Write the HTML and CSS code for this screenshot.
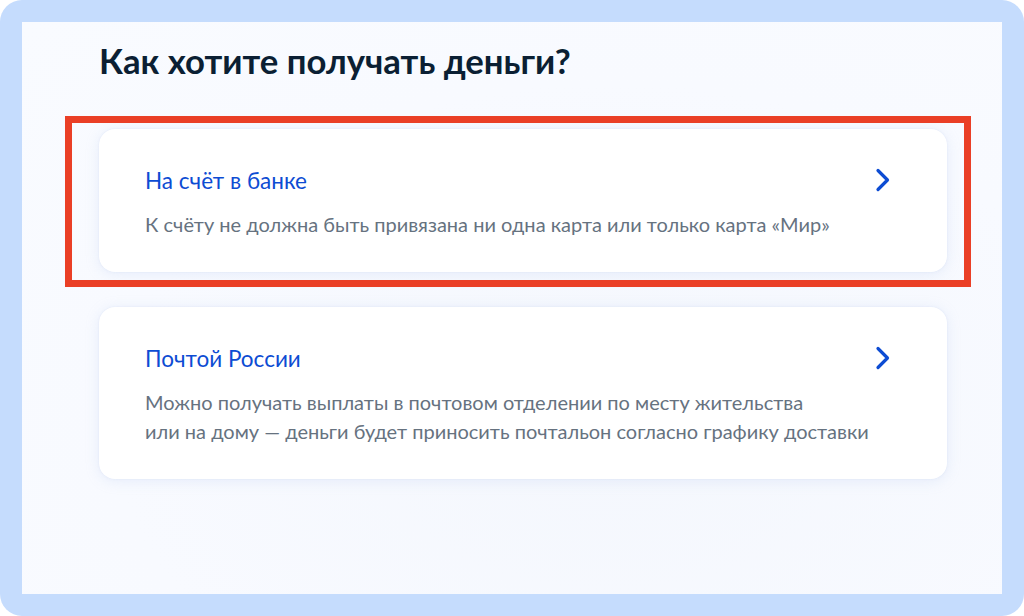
FILE: index.html
```html
<!DOCTYPE html>
<html lang="ru">
<head>
<meta charset="utf-8">
<title>Как хотите получать деньги?</title>
<link rel="stylesheet" href="styles.css">
</head>
<body>
<div class="frame">
  <main class="panel">
    <h1 class="heading">Как хотите получать деньги?</h1>
    <div class="options">
      <div class="highlight-wrap">
        <a class="card" href="#">
          <div class="card-body">
            <div class="card-title">На счёт в банке</div>
            <div class="card-text">К счёту не должна быть привязана ни одна карта или только карта «Мир»</div>
          </div>
          <svg class="chevron" width="16" height="24" viewBox="0 0 16 24" aria-hidden="true"><path d="M3 2.5 L12.5 12 L3 21.5" fill="none" stroke="#0d4cd3" stroke-width="3.2" stroke-linecap="round" stroke-linejoin="round"/></svg>
        </a>
        <span class="highlight"></span>
      </div>
      <a class="card" href="#">
        <div class="card-body">
          <div class="card-title">Почтой России</div>
          <div class="card-text">Можно получать выплаты в почтовом отделении по месту жительства<br>или на дому — деньги будет приносить почтальон согласно графику доставки</div>
        </div>
        <svg class="chevron" width="16" height="24" viewBox="0 0 16 24" aria-hidden="true"><path d="M3 2.5 L12.5 12 L3 21.5" fill="none" stroke="#0d4cd3" stroke-width="3.2" stroke-linecap="round" stroke-linejoin="round"/></svg>
      </a>
    </div>
  </main>
</div>
</body>
</html>
```

FILE: styles.css
```css
* { box-sizing: border-box; }
html, body { margin: 0; padding: 0; background: #ffffff; }
body { font-family: Lato, "Noto Sans", "Liberation Sans", sans-serif; }

.frame {
  width: 1024px;
  height: 616px;
  background: #c5dcfd;
  border-radius: 22px;
  padding: 22px;
}

.panel {
  height: 100%;
  background: radial-gradient(ellipse at 60% 70%, #f4f7fd 0%, #f8faff 60%, #f9fbff 100%);
  padding: 17px 55px 0 77px;
}

.heading {
  margin: 0;
  font-size: 34.7px;
  line-height: 44px;
  font-weight: 700;
  color: #0b1f33;
}

.options {
  margin-top: 46px;
  display: flex;
  flex-direction: column;
  gap: 35px;
}

.highlight-wrap { position: relative; }

.highlight {
  position: absolute;
  left: -34px;
  right: -24px;
  top: -13px;
  bottom: -15px;
  border: 7px solid #ea3f26;
  pointer-events: none;
}

.card {
  display: flex;
  align-items: flex-start;
  background: #ffffff;
  border-radius: 16px;
  padding: 38px 56px 33px 46px;
  box-shadow: 0 2px 14px rgba(170, 190, 230, 0.22), 0 0 2px rgba(170, 190, 230, 0.25);
  text-decoration: none;
}

.card-body { flex: 1; }

.card-title {
  font-size: 22.5px;
  line-height: 28px;
  color: #0d4cd3;
}

.card-text {
  margin-top: 15px;
  font-size: 20px;
  line-height: 29px;
  color: #66727f;
}

.chevron {
  flex: none;
  margin-top: 1px;
}
```
